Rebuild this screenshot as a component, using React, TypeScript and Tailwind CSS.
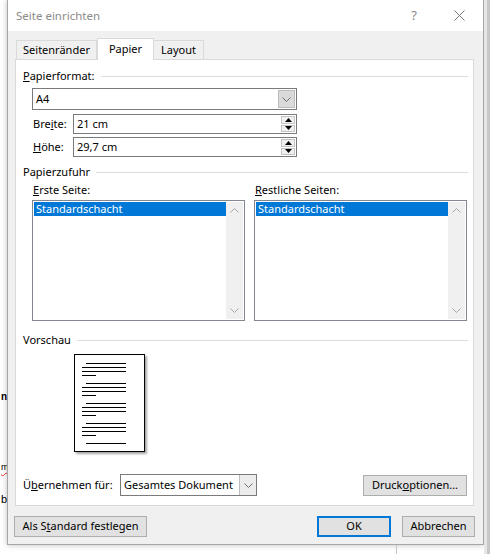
import React from "react";

const Chevron = ({ dir = "down", color = "#6d6d6d" }: { dir?: "down" | "up"; color?: string }) => (
  <svg width="9" height="5" viewBox="0 0 9 5">
    {dir === "down" ? (
      <polyline points="0.5,0.5 4.5,4.5 8.5,0.5" fill="none" stroke={color} strokeWidth="1" />
    ) : (
      <polyline points="0.5,4.5 4.5,0.5 8.5,4.5" fill="none" stroke={color} strokeWidth="1" />
    )}
  </svg>
);

const Tri = ({ up }: { up?: boolean }) => (
  <svg width="7" height="4" viewBox="0 0 7 4">
    {up ? <polygon points="0,4 7,4 3.5,0" fill="#000" /> : <polygon points="0,0 7,0 3.5,4" fill="#000" />}
  </svg>
);

const Spinner = () => (
  <div className="flex flex-col w-[15px] h-full gap-[1px] py-[1px] pr-[1px]">
    <div className="flex-1 flex items-center justify-center bg-[#f0f0f0] border border-[#c4c4c4]">
      <Tri up />
    </div>
    <div className="flex-1 flex items-center justify-center bg-[#f0f0f0] border border-[#c4c4c4]">
      <Tri />
    </div>
  </div>
);

const SectionLabel = ({ children, mt }: { children: React.ReactNode; mt: string }) => (
  <div className={`flex items-center gap-[6px] h-[16px] ${mt}`}>
    <span className="whitespace-nowrap">{children}</span>
    <div className="flex-1 h-px bg-[#dcdcdc] mr-[5px]" />
  </div>
);

const ListBox = () => (
  <div className="w-[213px] h-[121px] border border-[#828790] bg-white flex p-px">
    <div className="flex-1">
      <div className="h-[14px] bg-[#0078d7] text-white pl-[2px] leading-[14px]">Standardschacht</div>
    </div>
    <div className="w-[17px] bg-[#f0f0f0] flex flex-col justify-between items-center py-[6px]">
      <Chevron dir="up" color="#a6a6a6" />
      <Chevron dir="down" color="#a6a6a6" />
    </div>
  </div>
);

const PreviewPage = () => {
  const groups = [0, 1, 2, 3];
  return (
    <div className="w-[71px] h-[98px] border border-black bg-white shadow-[2px_2px_2px_rgba(0,0,0,0.35)]">
      <svg width="69" height="96" viewBox="0 0 69 96">
        {groups.map((g) => {
          const y = 8.5 + g * 20;
          return (
            <g key={g} stroke="#000" strokeWidth="1">
              <line x1="11" x2="51" y1={y} y2={y} />
              <line x1="7" x2="51" y1={y + 4} y2={y + 4} />
              <line x1="7" x2="51" y1={y + 8} y2={y + 8} />
              <line x1="7" x2="21" y1={y + 12} y2={y + 12} />
            </g>
          );
        })}
        <line x1="11" x2="51" y1={88.5} y2={88.5} stroke="#000" strokeWidth="1" />
      </svg>
    </div>
  );
};

const Btn = ({ children, w, primary }: { children: React.ReactNode; w: string; primary?: boolean }) => (
  <div
    className={`${w} h-[21px] flex items-center justify-center bg-[#e1e1e1] ${
      primary ? "border-2 border-[#0078d7]" : "border border-[#adadad]"
    }`}
  >
    {children}
  </div>
);

export default function App() {
  return (
    <div
      className="w-[490px] h-[554px] bg-white flex overflow-hidden text-[11px] text-black"
      style={{ fontFamily: '"Noto Sans", "Segoe UI", sans-serif' }}
    >
      {/* left: document text peeking */}
      <div className="w-[7px] shrink-0 overflow-hidden bg-white" style={{ fontFamily: '"Liberation Sans", sans-serif' }}>
        <div className="text-[10px] leading-[12px] pl-[1px]">
          <div className="mt-[391px] font-bold">n</div>
          <div className="mt-[58px] underline decoration-wavy decoration-[#e33] decoration-1 underline-offset-2 text-[9px]">m</div>
          <div className="mt-[20px] text-[11px]">b</div>
        </div>
      </div>

      <div className="flex flex-col w-[477px] shrink-0">
        {/* dialog */}
        <div className="w-[477px] h-[545px] border border-[#a6a6a6] border-t-0 bg-[#f0f0f0] flex flex-col shadow-[0_0_6px_rgba(0,0,0,0.25)]">
          {/* title bar */}
          <div className="h-[31px] bg-white flex items-center pl-[8px] pr-[18px] shrink-0">
            <span className="text-[11.5px] text-[#8a8a8a]">Seite einrichten</span>
            <span className="ml-auto mr-[37px] text-[13px] text-[#8a8a8a]">?</span>
            <svg width="11" height="11" viewBox="0 0 11 11">
              <line x1="0.5" y1="0.5" x2="10.5" y2="10.5" stroke="#7a7a7a" strokeWidth="1" />
              <line x1="10.5" y1="0.5" x2="0.5" y2="10.5" stroke="#7a7a7a" strokeWidth="1" />
            </svg>
          </div>

          {/* tabs */}
          <div className="flex items-end h-[21px] mt-[7px] ml-[8px] shrink-0 relative z-10">
            <div className="w-[81px] h-[19px] flex items-center justify-center border border-b-0 border-[#d9d9d9] bg-[#f0f0f0]">
              Seitenränder
            </div>
            <div className="w-[57px] h-[22px] -mb-px flex items-center justify-center border border-b-0 border-[#d9d9d9] bg-white">
              Papier
            </div>
            <div className="w-[50px] h-[19px] flex items-center justify-center border border-b-0 border-l-0 border-[#d9d9d9] bg-[#f0f0f0]">
              Layout
            </div>
          </div>

          {/* panel */}
          <div className="ml-[7px] w-[459px] h-[447px] bg-white border border-[#d9d9d9] flex flex-col pl-[7px] shrink-0">
            <SectionLabel mt="mt-[8px]">
              <u>P</u>apierformat:
            </SectionLabel>

            {/* A4 select */}
            <div className="ml-[9px] mt-[4px] w-[265px] h-[22px] border border-[#7a7a7a] flex items-center">
              <span className="pl-[3px]">A4</span>
              <div className="ml-auto w-[17px] h-[18px] mr-px bg-[#dadada] border border-[#bcbcbc] flex items-center justify-center">
                <Chevron />
              </div>
            </div>

            {/* Breite */}
            <div className="flex items-center mt-[4px] ml-[10px]">
              <span className="w-[40px]">
                Bre<u>i</u>te:
              </span>
              <div className="w-[224px] h-[20px] border border-[#7a7a7a] flex items-center">
                <span className="pl-[3px]">21 cm</span>
                <div className="ml-auto h-full">
                  <Spinner />
                </div>
              </div>
            </div>

            {/* Höhe */}
            <div className="flex items-center mt-[3px] ml-[10px]">
              <span className="w-[40px]">
                <u>H</u>öhe:
              </span>
              <div className="w-[224px] h-[20px] border border-[#7a7a7a] flex items-center">
                <span className="pl-[3px]">29,7 cm</span>
                <div className="ml-auto h-full">
                  <Spinner />
                </div>
              </div>
            </div>

            <SectionLabel mt="mt-[7px]">Papierzufuhr</SectionLabel>

            <div className="flex ml-[9px] gap-[9px] mt-[2px]">
              <div className="flex flex-col">
                <div className="h-[16px] pl-px">
                  <u>E</u>rste Seite:
                </div>
                <div className="mt-[2px]">
                  <ListBox />
                </div>
              </div>
              <div className="flex flex-col">
                <div className="h-[16px] pl-px">
                  <u>R</u>estliche Seiten:
                </div>
                <div className="mt-[2px]">
                  <ListBox />
                </div>
              </div>
            </div>

            <SectionLabel mt="mt-[11px]">Vorschau</SectionLabel>

            <div className="ml-[51px] mt-[6px]">
              <PreviewPage />
            </div>

            {/* Übernehmen */}
            <div className="flex items-center mt-[22px] pr-[6px]">
              <span className="w-[97px]">
                Ü<u>b</u>ernehmen für:
              </span>
              <div className="w-[137px] h-[22px] border border-[#7a7a7a] flex items-center">
                <span className="pl-[3px]">Gesamtes Dokument</span>
                <div className="ml-auto w-[17px] h-full border-l border-[#bcbcbc] bg-[#ececec] flex items-center justify-center">
                  <Chevron />
                </div>
              </div>
              <div className="ml-auto">
                <Btn w="w-[104px]">
                  Druck<u>o</u>ptionen...
                </Btn>
              </div>
            </div>
          </div>

          {/* bottom buttons */}
          <div className="flex items-center mt-[10px] ml-[6px]">
            <Btn w="w-[133px]">
              Als S<u>t</u>andard festlegen
            </Btn>
            <div className="ml-auto flex gap-[11px] mr-[8px]">
              <Btn w="w-[74px]" primary>
                OK
              </Btn>
              <Btn w="w-[73px]">Abbrechen</Btn>
            </div>
          </div>
        </div>

        {/* below dialog */}
        <div className="flex-1 flex">
          <div className="w-[389px] h-full" />
          <div className="w-px h-full bg-[#c6c6c6]" />
        </div>
      </div>

      {/* right shadow strip */}
      <div className="flex-1 flex">
        <div className="w-[3px] bg-[#e6e6e6]" />
        <div className="flex-1 bg-[#c8c8c8]" />
      </div>
    </div>
  );
}
